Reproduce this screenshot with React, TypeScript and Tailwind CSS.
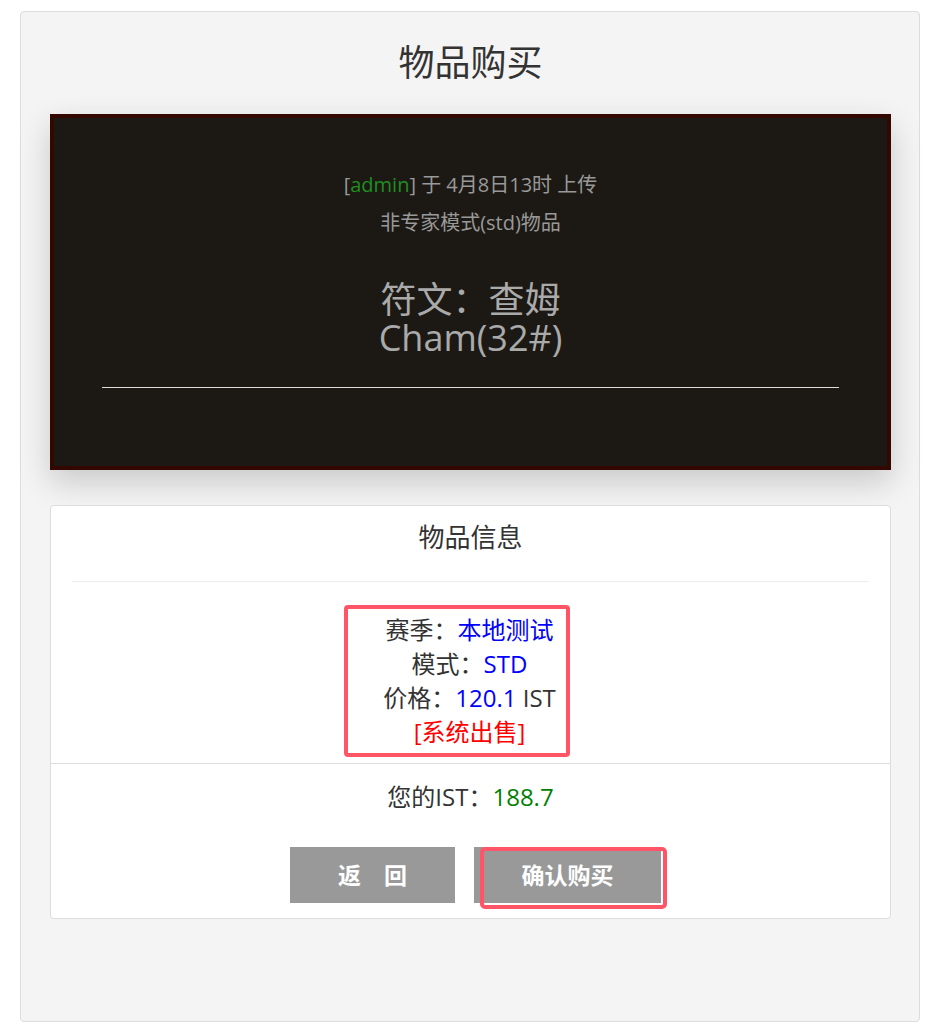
export default function App() {
  return (
    <div
      className="min-h-screen bg-white pt-[11px] pb-[14px]"
      style={{ fontFamily: '"Open Sans", "Noto Sans CJK SC", sans-serif' }}
    >
      <div className="ml-[20px] w-[900px] rounded border border-[#dddddd] bg-[#f4f4f4] pl-[29px] pr-[28px] pb-[102px]">
        <h1 className="flex h-[102px] items-center justify-center text-[36px] text-[#333333]">
          物品购买
        </h1>

        <div className="border-4 border-[#330800] bg-[#1c1915] pt-[48px] pb-[78px] shadow-[0_12px_30px_rgba(0,0,0,0.18)]">
          <div className="text-center text-[20px] leading-[38px] text-[#999999]">
            [<span className="text-[#1f8f1f]">admin</span>] 于 4月8日13时 上传
          </div>
          <div className="text-center text-[20px] leading-[38px] text-[#999999]">
            非专家模式(std)物品
          </div>
          <div className="mt-[39px] text-center text-[36px] leading-[38px] text-[#aaaaaa]">
            <div>符文：查姆</div>
            <div>Cham(32#)</div>
          </div>
          <div className="mx-[48px] mt-[30px] h-px bg-[#dddddd]" />
        </div>

        <div className="mt-[35px] rounded border border-[#dddddd] bg-white pb-[15px]">
          <div className="pt-[13px] pb-[26px] text-center text-[26px] leading-[36px] text-[#333333]">
            物品信息
          </div>
          <div className="mx-[21px] h-px bg-[#eeeeee]" />

          <div className="flex justify-center pt-[23px] pb-[6px]">
            <div className="mr-[28px] w-[226px] rounded border-4 border-[#ff5566] py-[4px] pl-[26px] text-center text-[24px] leading-[34px] text-[#333333]">
              <div>
                赛季：<span className="text-[#0000ff]">本地测试</span>
              </div>
              <div>
                模式：<span className="text-[#0000ff]">STD</span>
              </div>
              <div>
                价格：<span className="text-[#0000ff]">120.1</span> IST
              </div>
              <div className="text-[#ff0000]">[系统出售]</div>
            </div>
          </div>

          <div className="border-t border-[#dddddd] pt-[16px] text-center text-[24px] leading-[34px] text-[#333333]">
            您的IST：<span className="text-[#008000]">188.7</span>
          </div>

          <div className="mt-[33px] flex justify-center gap-[19px] pl-[10px]">
            <button className="h-[56px] w-[165px] bg-[#999999] text-[23px] font-bold text-white">
              返　回
            </button>
            <div className="relative">
              <button className="h-[56px] w-[187px] bg-[#999999] text-[23px] font-bold text-white">
                确认购买
              </button>
              <div className="pointer-events-none absolute top-0 left-[6px] h-[62px] w-[187px] rounded-[5px] border-4 border-[#ff5566]" />
            </div>
          </div>
        </div>
      </div>
    </div>
  );
}
